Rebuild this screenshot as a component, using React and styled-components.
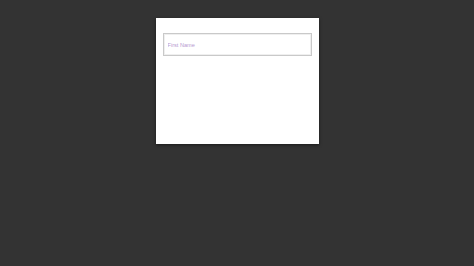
import React from "react";
import styled, { createGlobalStyle } from "styled-components";

const Global = createGlobalStyle`
  html, body { margin: 0; padding: 0; background: #333333; }
  body { font-family: "Liberation Sans", Arial, sans-serif; }
`;

const Page = styled.div`
  width: 474px;
  height: 266px;
  display: flex;
  justify-content: center;
  align-items: flex-start;
  padding-top: 18px;
  box-sizing: border-box;
`;

const Card = styled.div`
  width: 163px;
  height: 126px;
  background: #ffffff;
  box-sizing: border-box;
  padding: 15px 7px;
  box-shadow: 0 1px 3px rgba(0, 0, 0, 0.5);
`;

const Input = styled.input`
  display: block;
  width: 100%;
  height: 23px;
  box-sizing: border-box;
  border: 1px solid #c9c9c9;
  box-shadow: inset 0 0 0 1px #efefef;
  padding: 0 4px;
  font-family: "Liberation Sans", Arial, sans-serif;
  font-size: 5.6px;
  outline: none;
  background: #fff;
  &::placeholder { color: #b79ad0; }
`;

export default function App() {
  return (
    <>
      <Global />
      <Page>
        <Card>
          <Input placeholder="First Name" />
        </Card>
      </Page>
    </>
  );
}
